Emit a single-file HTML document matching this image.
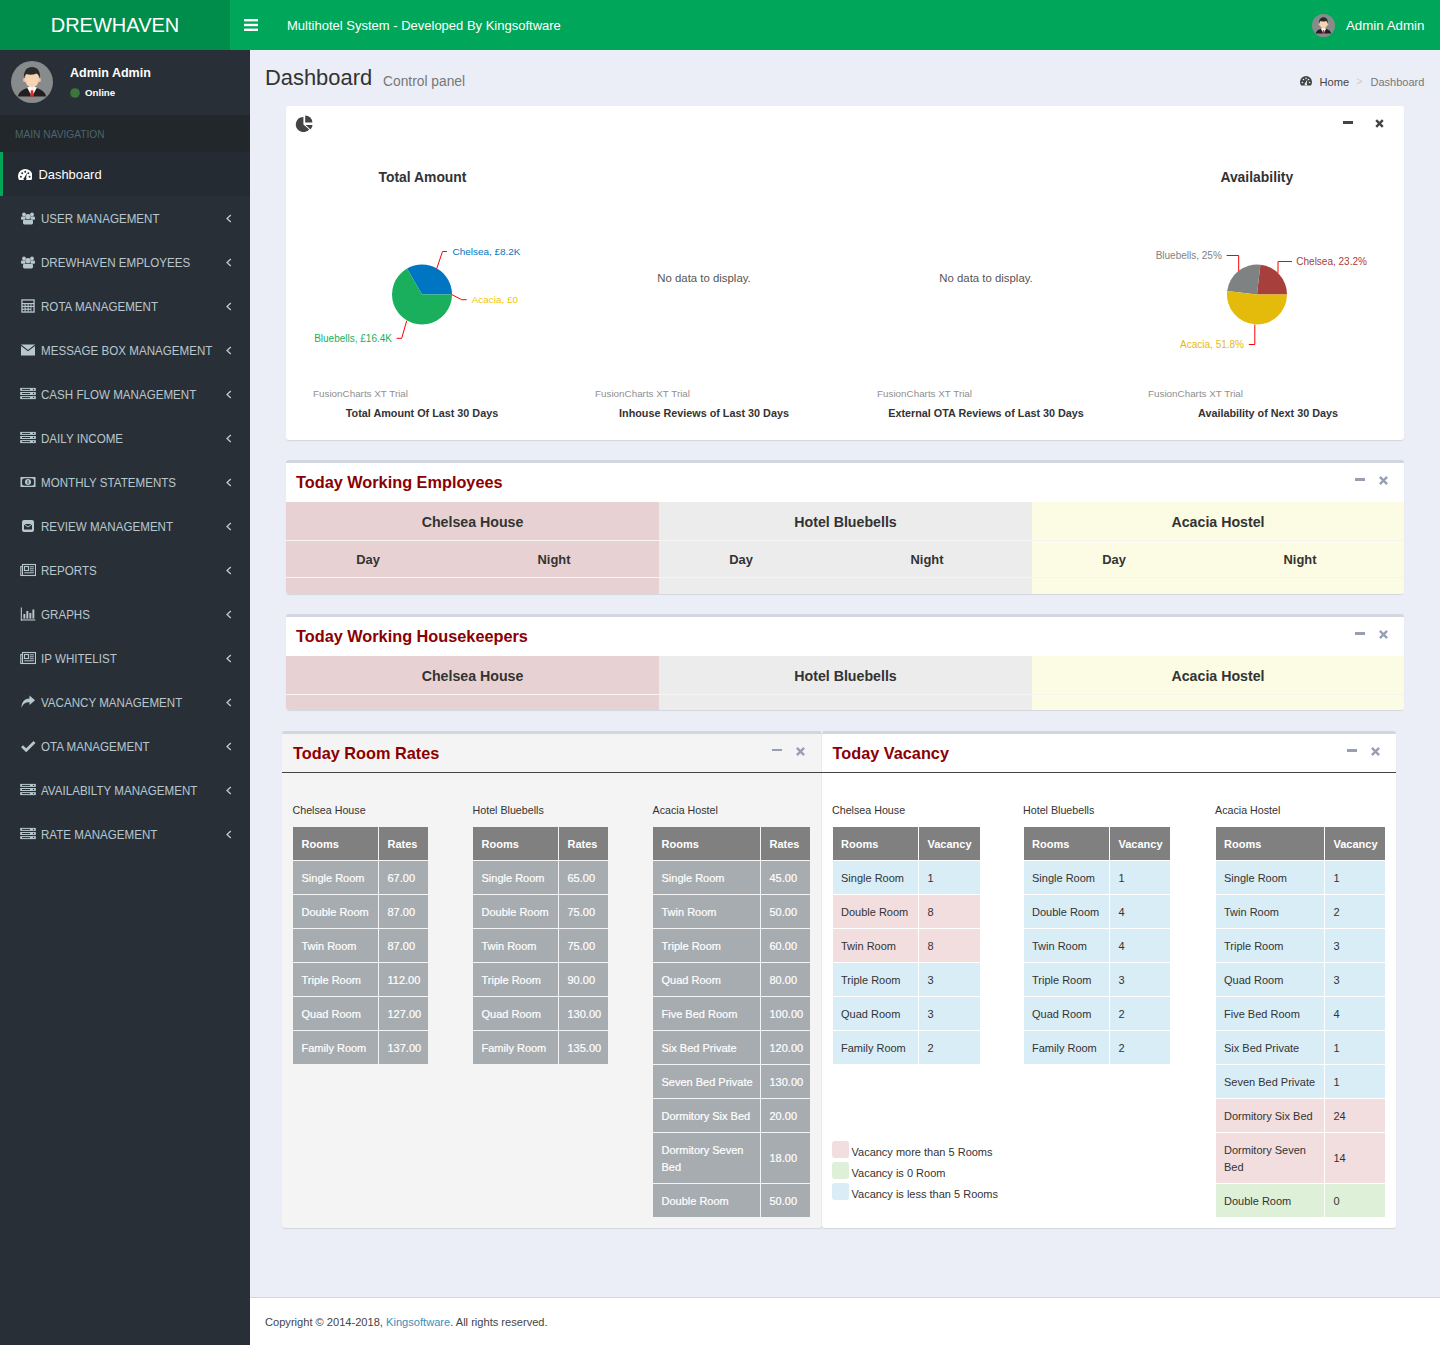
<!DOCTYPE html>
<html><head><meta charset="utf-8"><title>Dashboard</title>
<style>
*{box-sizing:border-box;margin:0;padding:0}
html,body{width:1440px;height:1345px;overflow:hidden}
body{position:relative;background:#ebeef6;font-family:"Liberation Sans",sans-serif;color:#333;font-size:13px}
.abs{position:absolute}
.nowrap{white-space:nowrap}
/* header */
#logo{left:0;top:0;width:230px;height:50px;background:#008d4c;color:#fff;font-size:20px;line-height:50px;text-align:center}
#navbar{left:230px;top:0;width:1210px;height:50px;background:#00a65a}
/* sidebar */
#sidebar{left:0;top:50px;width:250px;height:1295px;background:#292f37}
.menu{position:absolute;left:0;width:250px;height:44px;line-height:44px;color:#b8c7ce;font-size:11.6px}
.menu .ic{position:absolute;left:20px;top:14px;width:16px;height:16px}
.menu .tx{position:absolute;left:41px;top:0.5px;white-space:nowrap;font-size:13.6px;transform:scaleX(.853);transform-origin:0 50%}
.menu .ar{position:absolute;left:225px;top:18px;width:8px;height:9px}
/* boxes */
.box{position:absolute;background:#fff;border-radius:3px;box-shadow:0 1px 1px rgba(0,0,0,.1)}
.btop{border-top:3px solid #d2d6de}
.ttl{position:absolute;color:#8b0000;font-weight:bold;font-size:16.3px;white-space:nowrap}
.cell{position:absolute;text-align:center;font-weight:bold;color:#333}
.tc{-webkit-text-stroke:0.25px currentColor}
</style></head><body>

<!-- HEADER -->
<div id="logo" class="abs">DREWHAVEN</div>
<div id="navbar" class="abs">
  <svg class="abs" style="left:14px;top:19px" width="14" height="12" viewBox="0 0 14 12"><rect x="0" y="0" width="14" height="2.4" fill="#fff"/><rect x="0" y="4.8" width="14" height="2.4" fill="#fff"/><rect x="0" y="9.6" width="14" height="2.4" fill="#fff"/></svg>
  <div class="abs nowrap" style="left:57px;top:0.7px;line-height:50px;font-size:13px;color:#fff">Multihotel System - Developed By Kingsoftware</div>
  <svg class="abs" style="left:1082px;top:14px" width="23" height="23" viewBox="0 0 42 42"><use href="#avatar"/></svg>
  <div class="abs nowrap" style="left:1116px;top:0.5px;line-height:50px;font-size:13.3px;color:#fff">Admin Admin</div>
</div>

<!-- SIDEBAR -->
<div id="sidebar" class="abs"></div>
<svg class="abs" style="left:11px;top:61px" width="42" height="42" viewBox="0 0 42 42"><use href="#avatar"/></svg>
<div class="abs nowrap" style="left:70px;top:62.7px;line-height:20px;font-size:12.5px;font-weight:bold;color:#fff">Admin Admin</div>
<svg class="abs" style="left:70px;top:88px" width="10" height="10" viewBox="0 0 10 10"><circle cx="5" cy="5" r="4.8" fill="#3c763d"/></svg>
<div class="abs nowrap" style="left:85px;top:85px;line-height:16px;font-size:9.7px;font-weight:bold;color:#fff">Online</div>
<div class="abs" style="left:0;top:115px;width:250px;height:37px;background:#21272b"></div>
<div class="abs nowrap" style="left:15px;top:124.7px;line-height:20px;font-size:10.2px;color:#4b646f">MAIN NAVIGATION</div>
<div class="abs" style="left:0;top:152px;width:250px;height:44px;background:#252b33;border-left:3px solid #00a65a"></div>
<svg class="abs" style="left:17.5px;top:169px" width="14.5" height="11.4" viewBox="0 0 16 12.6"><use href="#i-dash"/></svg>
<div class="abs nowrap" style="left:38.5px;top:152.8px;line-height:44px;font-size:12.9px;color:#fff">Dashboard</div>
<svg width="0" height="0" style="position:absolute"><defs><g id="avatar"><circle cx="21" cy="21" r="21" fill="#888b8c"/><path d="M6.8 35.6C8 30.6 12 28.4 16.5 27L21 29L25.5 27C30 28.4 34 30.6 35.2 35.6Z" fill="#231f20"/><rect x="18.3" y="23" width="5.4" height="5" fill="#f0c9a4"/><path d="M16.2 26.8L21 35.6L25.8 26.8L23.6 25.8H18.4Z" fill="#fff"/><path d="M19.9 29.2H22.1L22.8 35.6H19.2Z" fill="#e8252a"/><ellipse cx="13.4" cy="19" rx="1.3" ry="2" fill="#f0c9a4"/><ellipse cx="28.6" cy="19" rx="1.3" ry="2" fill="#f0c9a4"/><ellipse cx="21" cy="18" rx="7" ry="8.4" fill="#f6d4b1"/><path d="M13 17.5C12.3 9.8 16 6 21 6C26 6 29.7 9.8 29 17.5C28.5 14.8 27.2 13.2 25.3 12.6C22.3 14.2 17.8 14 15.2 13C14 14.3 13.3 15.8 13 17.5Z" fill="#2b2b2b"/></g>
<g id="i-users" fill="#b8c7ce"><circle cx="4" cy="4.5" r="1.9"/><circle cx="12" cy="4.5" r="1.9"/><rect x="1" y="6.6" width="4.4" height="3.2" rx="1"/><rect x="10.6" y="6.6" width="4.4" height="3.2" rx="1"/><circle cx="8" cy="6.6" r="2.7"/><rect x="3" y="9.8" width="10" height="4.6" rx="1.4"/></g>
<g id="i-calc"><rect x="1.3" y="1.3" width="13.4" height="13.4" fill="#b8c7ce"/><rect x="2.6" y="2.6" width="10.8" height="2.4" fill="#292f37"/><g fill="#292f37"><rect x="2.6" y="6.2" width="2" height="1.6"/><rect x="5.6" y="6.2" width="2" height="1.6"/><rect x="8.6" y="6.2" width="2" height="1.6"/><rect x="11.4" y="6.2" width="2" height="1.6"/><rect x="2.6" y="9" width="2" height="1.6"/><rect x="5.6" y="9" width="2" height="1.6"/><rect x="8.6" y="9" width="2" height="1.6"/><rect x="11.4" y="9" width="2" height="4.4"/><rect x="2.6" y="11.8" width="2" height="1.6"/><rect x="5.6" y="11.8" width="2" height="1.6"/><rect x="8.6" y="11.8" width="2" height="1.6"/></g></g>
<g id="i-env"><rect x="1" y="2.5" width="14" height="11" fill="#b8c7ce"/><path d="M1 3.2L8 8.6L15 3.2" stroke="#292f37" stroke-width="1.1" fill="none"/></g>
<g id="i-server"><g fill="#b8c7ce"><rect x="0.2" y="1.9" width="15.6" height="3"/><rect x="0.2" y="6" width="15.6" height="3"/><rect x="0.2" y="10.1" width="15.6" height="3"/></g><g fill="#292f37"><rect x="2" y="2.9" width="8" height="1"/><rect x="2" y="7" width="8" height="1"/><rect x="2" y="11.1" width="8" height="1"/><circle cx="13.5" cy="3.4" r=".7"/><circle cx="13.5" cy="7.5" r=".7"/><circle cx="13.5" cy="11.6" r=".7"/></g></g>
<g id="i-money"><rect x="0.5" y="3" width="15" height="10" fill="#b8c7ce"/><rect x="2" y="4.3" width="12" height="7.4" rx="2.5" fill="#292f37"/><circle cx="8" cy="8" r="3" fill="#b8c7ce"/><rect x="7.5" y="6.2" width="1" height="3.6" fill="#292f37"/></g>
<g id="i-envsq"><rect x="2" y="2" width="12" height="12" rx="2" fill="#b8c7ce"/><rect x="4" y="6" width="8" height="5.5" fill="#292f37"/><path d="M4 6.2L8 9L12 6.2" stroke="#b8c7ce" stroke-width="1" fill="none"/></g>
<g id="i-news"><rect x="2.5" y="2.5" width="13" height="11" fill="none" stroke="#b8c7ce" stroke-width="1.1"/><path d="M2.5 4.5H0.8V13.5H2.5" fill="none" stroke="#b8c7ce" stroke-width="1.1"/><rect x="4.5" y="4.5" width="4" height="4" fill="none" stroke="#b8c7ce" stroke-width="1.1"/><g fill="#b8c7ce"><rect x="9.8" y="4.3" width="4" height="1"/><rect x="9.8" y="6.3" width="4" height="1"/><rect x="9.8" y="8.3" width="4" height="1"/><rect x="4.3" y="10.3" width="9.5" height="1"/></g></g>
<g id="i-bar" fill="#b8c7ce"><rect x="0.8" y="1.5" width="1.1" height="13"/><rect x="0.8" y="13.4" width="14.5" height="1.1"/><rect x="3.4" y="8" width="1.9" height="4.6"/><rect x="6.4" y="5" width="1.9" height="7.6"/><rect x="9.4" y="7" width="1.9" height="5.6"/><rect x="12.4" y="3.5" width="1.9" height="9.1"/></g>
<g id="i-share"><path d="M9.5 1.5L15 6.3L9.5 11V8.3C5.5 8.2 3.2 9.5 1.5 14C1.5 8.2 4.2 4.8 9.5 4.5Z" fill="#b8c7ce"/></g>
<g id="i-check"><path d="M2 8.2L6.2 12.2L14.5 4" stroke="#b8c7ce" stroke-width="2.8" fill="none"/></g>
<g id="i-dash"><path d="M1.45 12.6A8 8 0 1 1 14.55 12.6Z" fill="#fff"/><g fill="#252b33"><circle cx="3.2" cy="8.6" r="1.1"/><circle cx="4.6" cy="4.6" r="1.1"/><circle cx="8" cy="3" r="1.1"/><circle cx="11.4" cy="4.6" r="1.1"/><circle cx="12.8" cy="8.6" r="1.1"/><path d="M10 4.4L9 9.8A1.6 1.6 0 1 1 7 9.4Z"/></g></g>
</defs></svg>
<div class="menu" style="top:196px"><svg class="ic" viewBox="0 0 16 16"><use href="#i-users"/></svg><span class="tx">USER MANAGEMENT</span><svg class="ar" viewBox="0 0 8 10"><path d="M6 1L1.8 5L6 9" stroke="#b8c7ce" stroke-width="1.5" fill="none"/></svg></div>
<div class="menu" style="top:240px"><svg class="ic" viewBox="0 0 16 16"><use href="#i-users"/></svg><span class="tx">DREWHAVEN EMPLOYEES</span><svg class="ar" viewBox="0 0 8 10"><path d="M6 1L1.8 5L6 9" stroke="#b8c7ce" stroke-width="1.5" fill="none"/></svg></div>
<div class="menu" style="top:284px"><svg class="ic" viewBox="0 0 16 16"><use href="#i-calc"/></svg><span class="tx">ROTA MANAGEMENT</span><svg class="ar" viewBox="0 0 8 10"><path d="M6 1L1.8 5L6 9" stroke="#b8c7ce" stroke-width="1.5" fill="none"/></svg></div>
<div class="menu" style="top:328px"><svg class="ic" viewBox="0 0 16 16"><use href="#i-env"/></svg><span class="tx">MESSAGE BOX MANAGEMENT</span><svg class="ar" viewBox="0 0 8 10"><path d="M6 1L1.8 5L6 9" stroke="#b8c7ce" stroke-width="1.5" fill="none"/></svg></div>
<div class="menu" style="top:372px"><svg class="ic" viewBox="0 0 16 16"><use href="#i-server"/></svg><span class="tx">CASH FLOW MANAGEMENT</span><svg class="ar" viewBox="0 0 8 10"><path d="M6 1L1.8 5L6 9" stroke="#b8c7ce" stroke-width="1.5" fill="none"/></svg></div>
<div class="menu" style="top:416px"><svg class="ic" viewBox="0 0 16 16"><use href="#i-server"/></svg><span class="tx">DAILY INCOME</span><svg class="ar" viewBox="0 0 8 10"><path d="M6 1L1.8 5L6 9" stroke="#b8c7ce" stroke-width="1.5" fill="none"/></svg></div>
<div class="menu" style="top:460px"><svg class="ic" viewBox="0 0 16 16"><use href="#i-money"/></svg><span class="tx">MONTHLY STATEMENTS</span><svg class="ar" viewBox="0 0 8 10"><path d="M6 1L1.8 5L6 9" stroke="#b8c7ce" stroke-width="1.5" fill="none"/></svg></div>
<div class="menu" style="top:504px"><svg class="ic" viewBox="0 0 16 16"><use href="#i-envsq"/></svg><span class="tx">REVIEW MANAGEMENT</span><svg class="ar" viewBox="0 0 8 10"><path d="M6 1L1.8 5L6 9" stroke="#b8c7ce" stroke-width="1.5" fill="none"/></svg></div>
<div class="menu" style="top:548px"><svg class="ic" viewBox="0 0 16 16"><use href="#i-news"/></svg><span class="tx">REPORTS</span><svg class="ar" viewBox="0 0 8 10"><path d="M6 1L1.8 5L6 9" stroke="#b8c7ce" stroke-width="1.5" fill="none"/></svg></div>
<div class="menu" style="top:592px"><svg class="ic" viewBox="0 0 16 16"><use href="#i-bar"/></svg><span class="tx">GRAPHS</span><svg class="ar" viewBox="0 0 8 10"><path d="M6 1L1.8 5L6 9" stroke="#b8c7ce" stroke-width="1.5" fill="none"/></svg></div>
<div class="menu" style="top:636px"><svg class="ic" viewBox="0 0 16 16"><use href="#i-news"/></svg><span class="tx">IP WHITELIST</span><svg class="ar" viewBox="0 0 8 10"><path d="M6 1L1.8 5L6 9" stroke="#b8c7ce" stroke-width="1.5" fill="none"/></svg></div>
<div class="menu" style="top:680px"><svg class="ic" viewBox="0 0 16 16"><use href="#i-share"/></svg><span class="tx">VACANCY MANAGEMENT</span><svg class="ar" viewBox="0 0 8 10"><path d="M6 1L1.8 5L6 9" stroke="#b8c7ce" stroke-width="1.5" fill="none"/></svg></div>
<div class="menu" style="top:724px"><svg class="ic" viewBox="0 0 16 16"><use href="#i-check"/></svg><span class="tx">OTA MANAGEMENT</span><svg class="ar" viewBox="0 0 8 10"><path d="M6 1L1.8 5L6 9" stroke="#b8c7ce" stroke-width="1.5" fill="none"/></svg></div>
<div class="menu" style="top:768px"><svg class="ic" viewBox="0 0 16 16"><use href="#i-server"/></svg><span class="tx">AVAILABILTY MANAGEMENT</span><svg class="ar" viewBox="0 0 8 10"><path d="M6 1L1.8 5L6 9" stroke="#b8c7ce" stroke-width="1.5" fill="none"/></svg></div>
<div class="menu" style="top:812px"><svg class="ic" viewBox="0 0 16 16"><use href="#i-server"/></svg><span class="tx">RATE MANAGEMENT</span><svg class="ar" viewBox="0 0 8 10"><path d="M6 1L1.8 5L6 9" stroke="#b8c7ce" stroke-width="1.5" fill="none"/></svg></div>

<!-- CONTENT HEADER -->
<div class="abs nowrap" style="left:265px;top:63px;line-height:30px;font-size:21.9px;color:#333">Dashboard</div>
<div class="abs nowrap" style="left:383px;top:71.5px;line-height:20px;font-size:13.8px;color:#777">Control panel</div>

<svg class="abs" style="left:1300px;top:76px" width="12" height="9.6" viewBox="0 0 16 12.6"><path d="M1.45 12.6A8 8 0 1 1 14.55 12.6Z" fill="#444"/><g fill="#ebeef6"><circle cx="3.2" cy="8.6" r="1.1"/><circle cx="4.6" cy="4.6" r="1.1"/><circle cx="8" cy="3" r="1.1"/><circle cx="11.4" cy="4.6" r="1.1"/><circle cx="12.8" cy="8.6" r="1.1"/><path d="M10 4.4L9 9.8A1.6 1.6 0 1 1 7 9.4Z"/></g></svg>
<div class="abs nowrap" style="left:1319.5px;top:72px;line-height:20px;font-size:11.1px;color:#444">Home</div>
<div class="abs nowrap" style="left:1356.5px;top:72px;line-height:20px;font-size:10px;color:#ccc">&gt;</div>
<div class="abs nowrap" style="left:1370.5px;top:72px;line-height:20px;font-size:11px;color:#777">Dashboard</div>
<!-- BOX 1 charts -->
<div class="box" style="left:286px;top:106px;width:1118px;height:334px">
<svg class="abs" style="left:0;top:0" width="1118" height="334" viewBox="0 0 1118 334" font-family="Liberation Sans">
<g transform="translate(6,5)" fill="#444"><path d="M11.4 13.5V5.9A7.6 7.6 0 1 0 17.2 18.4Z"/><path d="M13.2 11.6V4.4A7.2 7.2 0 0 1 20.4 11.6Z"/><path d="M13.6 13.9H20.5A7.2 7.2 0 0 1 18.6 18.4Z"/></g>
<path d="M136 188.5L166.00 188.50A30 30 0 0 0 121.00 162.52Z" fill="#0075c2"/><path d="M136 188.5L121.00 162.52A30 30 0 1 0 166.00 188.50Z" fill="#1aaf5d"/><path d="M971 188.5L1001.00 188.50A30 30 0 0 0 974.40 158.69Z" fill="#a6403d"/><path d="M971 188.5L974.40 158.69A30 30 0 0 0 941.19 185.10Z" fill="#7f8283"/><path d="M971 188.5L941.19 185.10A30 30 0 1 0 1001.00 188.50Z" fill="#e5bb0b"/><polyline points="150.7,162.7 156.5,145.5 161.0,145.5" fill="none" stroke="#ff0000" stroke-width="1"/><polyline points="165.7,188.5 175.7,193.7 180.7,193.7" fill="none" stroke="#ff0000" stroke-width="1"/><polyline points="120.7,214.8 115.7,232.3 110.7,232.3" fill="none" stroke="#ff0000" stroke-width="1"/><polyline points="940.6,149.5 952.7,149.5 952.7,165.0" fill="none" stroke="#ff0000" stroke-width="1"/><polyline points="992.0,167.0 992.0,155.5 1006.0,155.5" fill="none" stroke="#ff0000" stroke-width="1"/><polyline points="968.8,218.7 968.8,238.5 962.8,238.5" fill="none" stroke="#ff0000" stroke-width="1"/><text x="166.5" y="145.7" fill="#0075c2" font-size="9.95" text-anchor="start" font-weight="normal" dominant-baseline="central">Chelsea, £8.2K</text><text x="185.7" y="193.7" fill="#f2c500" font-size="9.95" text-anchor="start" font-weight="normal" dominant-baseline="central">Acacia, £0</text><text x="106.0" y="232.0" fill="#1aaf5d" font-size="10" text-anchor="end" font-weight="normal" dominant-baseline="central">Bluebells, £16.4K</text><text x="935.8" y="149.5" fill="#7f8283" font-size="10" text-anchor="end" font-weight="normal" dominant-baseline="central">Bluebells, 25%</text><text x="1010.3" y="155.0" fill="#a6403d" font-size="10" text-anchor="start" font-weight="normal" dominant-baseline="central">Chelsea, 23.2%</text><text x="958.0" y="238.0" fill="#e5bb0b" font-size="10" text-anchor="end" font-weight="normal" dominant-baseline="central">Acacia, 51.8%</text><text x="136.5" y="70.6" fill="#333" font-size="13.9" text-anchor="middle" font-weight="bold" dominant-baseline="central">Total Amount</text><text x="970.8" y="70.6" fill="#333" font-size="13.9" text-anchor="middle" font-weight="bold" dominant-baseline="central">Availability</text><text x="418.0" y="172.4" fill="#555" font-size="11.4" text-anchor="middle" font-weight="normal" dominant-baseline="central">No data to display.</text><text x="700.0" y="172.4" fill="#555" font-size="11.4" text-anchor="middle" font-weight="normal" dominant-baseline="central">No data to display.</text><text x="27.0" y="287.3" fill="#8f8f8f" font-size="9.85" text-anchor="start" font-weight="normal" dominant-baseline="central">FusionCharts XT Trial</text><text x="309.0" y="287.3" fill="#8f8f8f" font-size="9.85" text-anchor="start" font-weight="normal" dominant-baseline="central">FusionCharts XT Trial</text><text x="591.0" y="287.3" fill="#8f8f8f" font-size="9.85" text-anchor="start" font-weight="normal" dominant-baseline="central">FusionCharts XT Trial</text><text x="862.0" y="287.3" fill="#8f8f8f" font-size="9.85" text-anchor="start" font-weight="normal" dominant-baseline="central">FusionCharts XT Trial</text><text x="136.0" y="307.2" fill="#333" font-size="10.8" text-anchor="middle" font-weight="bold" dominant-baseline="central">Total Amount Of Last 30 Days</text><text x="418.0" y="307.2" fill="#333" font-size="10.8" text-anchor="middle" font-weight="bold" dominant-baseline="central">Inhouse Reviews of Last 30 Days</text><text x="700.0" y="307.2" fill="#333" font-size="10.8" text-anchor="middle" font-weight="bold" dominant-baseline="central">External OTA Reviews of Last 30 Days</text><text x="982.0" y="307.2" fill="#333" font-size="10.8" text-anchor="middle" font-weight="bold" dominant-baseline="central">Availability of Next 30 Days</text>
</svg>
</div>

<div class="abs" style="left:1342.5px;top:121px;width:10px;height:3px;background:#444"></div>
<svg class="abs" style="left:1375.3px;top:118.8px" width="9" height="9" viewBox="0 0 9 9"><path d="M1.2 1.2L7.8 7.8M7.8 1.2L1.2 7.8" stroke="#444" stroke-width="2.4"/></svg>
<!-- BOX 2 -->
<div class="box" style="left:286px;top:460px;width:1118px;height:134px;border-top:3px solid #d2d6de;overflow:hidden"></div><div class="ttl" style="left:296px;top:472px;line-height:20px">Today Working Employees</div><div class="abs" style="left:1354.6px;top:478.15px;width:10px;height:2.5px;background:#97a0b3"></div><svg class="abs" style="left:1378.9px;top:475.5px" width="9" height="9" viewBox="0 0 9 9"><path d="M0.9 0.9L8.1 8.1M8.1 0.9L0.9 8.1" stroke="#97a0b3" stroke-width="2.4"/></svg><div class="abs" style="left:286px;top:502px;width:373px;height:92px;background:#e8d1d2;border-bottom-left-radius:3px"></div><div class="abs" style="left:286px;top:540px;width:373px;height:1px;background:#f4f4f4"></div><div class="cell" style="left:286px;top:502.8px;width:373px;line-height:38px;font-size:14.2px">Chelsea House</div><div class="abs" style="left:286px;top:577px;width:373px;height:1px;background:#f4f4f4"></div><div class="cell" style="left:286px;top:542px;width:164px;line-height:36px;font-size:12.9px">Day</div><div class="cell" style="left:450px;top:542px;width:208px;line-height:36px;font-size:12.9px">Night</div><div class="abs" style="left:659px;top:502px;width:373px;height:92px;background:#ececec"></div><div class="abs" style="left:659px;top:540px;width:373px;height:1px;background:#f4f4f4"></div><div class="cell" style="left:659px;top:502.8px;width:373px;line-height:38px;font-size:14.2px">Hotel Bluebells</div><div class="abs" style="left:659px;top:577px;width:373px;height:1px;background:#f4f4f4"></div><div class="cell" style="left:659px;top:542px;width:164px;line-height:36px;font-size:12.9px">Day</div><div class="cell" style="left:823px;top:542px;width:208px;line-height:36px;font-size:12.9px">Night</div><div class="abs" style="left:1032px;top:502px;width:372px;height:92px;background:#fcfce4;border-bottom-right-radius:3px"></div><div class="abs" style="left:1032px;top:540px;width:372px;height:1px;background:#f4f4f4"></div><div class="cell" style="left:1032px;top:502.8px;width:372px;line-height:38px;font-size:14.2px">Acacia Hostel</div><div class="abs" style="left:1032px;top:577px;width:372px;height:1px;background:#f4f4f4"></div><div class="cell" style="left:1032px;top:542px;width:164px;line-height:36px;font-size:12.9px">Day</div><div class="cell" style="left:1196px;top:542px;width:208px;line-height:36px;font-size:12.9px">Night</div>
<!-- BOX 3 -->
<div class="box" style="left:286px;top:614px;width:1118px;height:96px;border-top:3px solid #d2d6de;overflow:hidden"></div><div class="ttl" style="left:296px;top:626px;line-height:20px">Today Working Housekeepers</div><div class="abs" style="left:1354.6px;top:632.15px;width:10px;height:2.5px;background:#97a0b3"></div><svg class="abs" style="left:1378.9px;top:629.5px" width="9" height="9" viewBox="0 0 9 9"><path d="M0.9 0.9L8.1 8.1M8.1 0.9L0.9 8.1" stroke="#97a0b3" stroke-width="2.4"/></svg><div class="abs" style="left:286px;top:656px;width:373px;height:54px;background:#e8d1d2;border-bottom-left-radius:3px"></div><div class="abs" style="left:286px;top:694px;width:373px;height:1px;background:#f4f4f4"></div><div class="cell" style="left:286px;top:656.8px;width:373px;line-height:38px;font-size:14.2px">Chelsea House</div><div class="abs" style="left:659px;top:656px;width:373px;height:54px;background:#ececec"></div><div class="abs" style="left:659px;top:694px;width:373px;height:1px;background:#f4f4f4"></div><div class="cell" style="left:659px;top:656.8px;width:373px;line-height:38px;font-size:14.2px">Hotel Bluebells</div><div class="abs" style="left:1032px;top:656px;width:372px;height:54px;background:#fcfce4;border-bottom-right-radius:3px"></div><div class="abs" style="left:1032px;top:694px;width:372px;height:1px;background:#f4f4f4"></div><div class="cell" style="left:1032px;top:656.8px;width:372px;line-height:38px;font-size:14.2px">Acacia Hostel</div>
<!-- BOX 4 -->
<div class="box" style="left:282px;top:731px;width:540px;height:497px;background:#f4f4f4;border-top:3px solid #d2d6de;border-right:1px solid #ececec"></div>
<div class="abs" style="left:282px;top:772px;width:540px;height:1px;background:#444"></div>
<div class="ttl" style="left:293px;top:743px;line-height:20px">Today Room Rates</div>
<div class="abs" style="left:772.2px;top:748.95px;width:10px;height:2.5px;background:#97a0b3"></div><svg class="abs" style="left:796.4px;top:746.5px" width="9" height="9" viewBox="0 0 9 9"><path d="M0.9 0.9L8.1 8.1M8.1 0.9L0.9 8.1" stroke="#97a0b3" stroke-width="2.4"/></svg>
<!-- BOX 5 -->
<div class="box" style="left:822px;top:731px;width:574px;height:497px;background:#fff;border-top:3px solid #d2d6de"></div>
<div class="abs" style="left:822px;top:772px;width:574px;height:1px;background:#444"></div>
<div class="ttl" style="left:832.5px;top:743px;line-height:20px">Today Vacancy</div>
<div class="abs" style="left:1346.6px;top:749.05px;width:10px;height:2.5px;background:#97a0b3"></div><svg class="abs" style="left:1370.9px;top:746.5px" width="9" height="9" viewBox="0 0 9 9"><path d="M0.9 0.9L8.1 8.1M8.1 0.9L0.9 8.1" stroke="#97a0b3" stroke-width="2.4"/></svg>
<div class="abs nowrap" style="left:292.5px;top:800px;line-height:20px;font-size:10.7px;color:#333">Chelsea House</div><div class="abs" style="left:293px;top:827px;width:85px;height:33px;background:#808080"></div><div class="abs" style="left:301.5px;top:827.7px;height:33px;display:flex;align-items:center;font-size:11px;font-weight:bold;color:#fff;line-height:17px;white-space:nowrap">Rooms</div><div class="abs" style="left:379px;top:827px;width:49px;height:33px;background:#808080"></div><div class="abs" style="left:387.5px;top:827.7px;height:33px;display:flex;align-items:center;font-size:11px;font-weight:bold;color:#fff;line-height:17px;white-space:nowrap">Rates</div><div class="abs" style="left:293px;top:861px;width:85px;height:33px;background:#a7acb0"></div><div class="abs" style="left:301.5px;top:861.7px;height:33px;display:flex;align-items:center;font-size:11px;-webkit-text-stroke:0.2px currentColor;color:#fff;line-height:17px;white-space:nowrap">Single Room</div><div class="abs" style="left:379px;top:861px;width:49px;height:33px;background:#a7acb0"></div><div class="abs" style="left:387.5px;top:861.7px;height:33px;display:flex;align-items:center;font-size:11px;-webkit-text-stroke:0.2px currentColor;color:#fff;line-height:17px;white-space:nowrap">67.00</div><div class="abs" style="left:293px;top:895px;width:85px;height:33px;background:#a7acb0"></div><div class="abs" style="left:301.5px;top:895.7px;height:33px;display:flex;align-items:center;font-size:11px;-webkit-text-stroke:0.2px currentColor;color:#fff;line-height:17px;white-space:nowrap">Double Room</div><div class="abs" style="left:379px;top:895px;width:49px;height:33px;background:#a7acb0"></div><div class="abs" style="left:387.5px;top:895.7px;height:33px;display:flex;align-items:center;font-size:11px;-webkit-text-stroke:0.2px currentColor;color:#fff;line-height:17px;white-space:nowrap">87.00</div><div class="abs" style="left:293px;top:929px;width:85px;height:33px;background:#a7acb0"></div><div class="abs" style="left:301.5px;top:929.7px;height:33px;display:flex;align-items:center;font-size:11px;-webkit-text-stroke:0.2px currentColor;color:#fff;line-height:17px;white-space:nowrap">Twin Room</div><div class="abs" style="left:379px;top:929px;width:49px;height:33px;background:#a7acb0"></div><div class="abs" style="left:387.5px;top:929.7px;height:33px;display:flex;align-items:center;font-size:11px;-webkit-text-stroke:0.2px currentColor;color:#fff;line-height:17px;white-space:nowrap">87.00</div><div class="abs" style="left:293px;top:963px;width:85px;height:33px;background:#a7acb0"></div><div class="abs" style="left:301.5px;top:963.7px;height:33px;display:flex;align-items:center;font-size:11px;-webkit-text-stroke:0.2px currentColor;color:#fff;line-height:17px;white-space:nowrap">Triple Room</div><div class="abs" style="left:379px;top:963px;width:49px;height:33px;background:#a7acb0"></div><div class="abs" style="left:387.5px;top:963.7px;height:33px;display:flex;align-items:center;font-size:11px;-webkit-text-stroke:0.2px currentColor;color:#fff;line-height:17px;white-space:nowrap">112.00</div><div class="abs" style="left:293px;top:997px;width:85px;height:33px;background:#a7acb0"></div><div class="abs" style="left:301.5px;top:997.7px;height:33px;display:flex;align-items:center;font-size:11px;-webkit-text-stroke:0.2px currentColor;color:#fff;line-height:17px;white-space:nowrap">Quad Room</div><div class="abs" style="left:379px;top:997px;width:49px;height:33px;background:#a7acb0"></div><div class="abs" style="left:387.5px;top:997.7px;height:33px;display:flex;align-items:center;font-size:11px;-webkit-text-stroke:0.2px currentColor;color:#fff;line-height:17px;white-space:nowrap">127.00</div><div class="abs" style="left:293px;top:1031px;width:85px;height:33px;background:#a7acb0"></div><div class="abs" style="left:301.5px;top:1031.7px;height:33px;display:flex;align-items:center;font-size:11px;-webkit-text-stroke:0.2px currentColor;color:#fff;line-height:17px;white-space:nowrap">Family Room</div><div class="abs" style="left:379px;top:1031px;width:49px;height:33px;background:#a7acb0"></div><div class="abs" style="left:387.5px;top:1031.7px;height:33px;display:flex;align-items:center;font-size:11px;-webkit-text-stroke:0.2px currentColor;color:#fff;line-height:17px;white-space:nowrap">137.00</div>
<div class="abs nowrap" style="left:472.5px;top:800px;line-height:20px;font-size:10.7px;color:#333">Hotel Bluebells</div><div class="abs" style="left:473px;top:827px;width:85px;height:33px;background:#808080"></div><div class="abs" style="left:481.5px;top:827.7px;height:33px;display:flex;align-items:center;font-size:11px;font-weight:bold;color:#fff;line-height:17px;white-space:nowrap">Rooms</div><div class="abs" style="left:559px;top:827px;width:49px;height:33px;background:#808080"></div><div class="abs" style="left:567.5px;top:827.7px;height:33px;display:flex;align-items:center;font-size:11px;font-weight:bold;color:#fff;line-height:17px;white-space:nowrap">Rates</div><div class="abs" style="left:473px;top:861px;width:85px;height:33px;background:#a7acb0"></div><div class="abs" style="left:481.5px;top:861.7px;height:33px;display:flex;align-items:center;font-size:11px;-webkit-text-stroke:0.2px currentColor;color:#fff;line-height:17px;white-space:nowrap">Single Room</div><div class="abs" style="left:559px;top:861px;width:49px;height:33px;background:#a7acb0"></div><div class="abs" style="left:567.5px;top:861.7px;height:33px;display:flex;align-items:center;font-size:11px;-webkit-text-stroke:0.2px currentColor;color:#fff;line-height:17px;white-space:nowrap">65.00</div><div class="abs" style="left:473px;top:895px;width:85px;height:33px;background:#a7acb0"></div><div class="abs" style="left:481.5px;top:895.7px;height:33px;display:flex;align-items:center;font-size:11px;-webkit-text-stroke:0.2px currentColor;color:#fff;line-height:17px;white-space:nowrap">Double Room</div><div class="abs" style="left:559px;top:895px;width:49px;height:33px;background:#a7acb0"></div><div class="abs" style="left:567.5px;top:895.7px;height:33px;display:flex;align-items:center;font-size:11px;-webkit-text-stroke:0.2px currentColor;color:#fff;line-height:17px;white-space:nowrap">75.00</div><div class="abs" style="left:473px;top:929px;width:85px;height:33px;background:#a7acb0"></div><div class="abs" style="left:481.5px;top:929.7px;height:33px;display:flex;align-items:center;font-size:11px;-webkit-text-stroke:0.2px currentColor;color:#fff;line-height:17px;white-space:nowrap">Twin Room</div><div class="abs" style="left:559px;top:929px;width:49px;height:33px;background:#a7acb0"></div><div class="abs" style="left:567.5px;top:929.7px;height:33px;display:flex;align-items:center;font-size:11px;-webkit-text-stroke:0.2px currentColor;color:#fff;line-height:17px;white-space:nowrap">75.00</div><div class="abs" style="left:473px;top:963px;width:85px;height:33px;background:#a7acb0"></div><div class="abs" style="left:481.5px;top:963.7px;height:33px;display:flex;align-items:center;font-size:11px;-webkit-text-stroke:0.2px currentColor;color:#fff;line-height:17px;white-space:nowrap">Triple Room</div><div class="abs" style="left:559px;top:963px;width:49px;height:33px;background:#a7acb0"></div><div class="abs" style="left:567.5px;top:963.7px;height:33px;display:flex;align-items:center;font-size:11px;-webkit-text-stroke:0.2px currentColor;color:#fff;line-height:17px;white-space:nowrap">90.00</div><div class="abs" style="left:473px;top:997px;width:85px;height:33px;background:#a7acb0"></div><div class="abs" style="left:481.5px;top:997.7px;height:33px;display:flex;align-items:center;font-size:11px;-webkit-text-stroke:0.2px currentColor;color:#fff;line-height:17px;white-space:nowrap">Quad Room</div><div class="abs" style="left:559px;top:997px;width:49px;height:33px;background:#a7acb0"></div><div class="abs" style="left:567.5px;top:997.7px;height:33px;display:flex;align-items:center;font-size:11px;-webkit-text-stroke:0.2px currentColor;color:#fff;line-height:17px;white-space:nowrap">130.00</div><div class="abs" style="left:473px;top:1031px;width:85px;height:33px;background:#a7acb0"></div><div class="abs" style="left:481.5px;top:1031.7px;height:33px;display:flex;align-items:center;font-size:11px;-webkit-text-stroke:0.2px currentColor;color:#fff;line-height:17px;white-space:nowrap">Family Room</div><div class="abs" style="left:559px;top:1031px;width:49px;height:33px;background:#a7acb0"></div><div class="abs" style="left:567.5px;top:1031.7px;height:33px;display:flex;align-items:center;font-size:11px;-webkit-text-stroke:0.2px currentColor;color:#fff;line-height:17px;white-space:nowrap">135.00</div>
<div class="abs nowrap" style="left:652.5px;top:800px;line-height:20px;font-size:10.7px;color:#333">Acacia Hostel</div><div class="abs" style="left:653px;top:827px;width:107px;height:33px;background:#808080"></div><div class="abs" style="left:661.5px;top:827.7px;height:33px;display:flex;align-items:center;font-size:11px;font-weight:bold;color:#fff;line-height:17px;white-space:nowrap">Rooms</div><div class="abs" style="left:761px;top:827px;width:49px;height:33px;background:#808080"></div><div class="abs" style="left:769.5px;top:827.7px;height:33px;display:flex;align-items:center;font-size:11px;font-weight:bold;color:#fff;line-height:17px;white-space:nowrap">Rates</div><div class="abs" style="left:653px;top:861px;width:107px;height:33px;background:#a7acb0"></div><div class="abs" style="left:661.5px;top:861.7px;height:33px;display:flex;align-items:center;font-size:11px;-webkit-text-stroke:0.2px currentColor;color:#fff;line-height:17px;white-space:nowrap">Single Room</div><div class="abs" style="left:761px;top:861px;width:49px;height:33px;background:#a7acb0"></div><div class="abs" style="left:769.5px;top:861.7px;height:33px;display:flex;align-items:center;font-size:11px;-webkit-text-stroke:0.2px currentColor;color:#fff;line-height:17px;white-space:nowrap">45.00</div><div class="abs" style="left:653px;top:895px;width:107px;height:33px;background:#a7acb0"></div><div class="abs" style="left:661.5px;top:895.7px;height:33px;display:flex;align-items:center;font-size:11px;-webkit-text-stroke:0.2px currentColor;color:#fff;line-height:17px;white-space:nowrap">Twin Room</div><div class="abs" style="left:761px;top:895px;width:49px;height:33px;background:#a7acb0"></div><div class="abs" style="left:769.5px;top:895.7px;height:33px;display:flex;align-items:center;font-size:11px;-webkit-text-stroke:0.2px currentColor;color:#fff;line-height:17px;white-space:nowrap">50.00</div><div class="abs" style="left:653px;top:929px;width:107px;height:33px;background:#a7acb0"></div><div class="abs" style="left:661.5px;top:929.7px;height:33px;display:flex;align-items:center;font-size:11px;-webkit-text-stroke:0.2px currentColor;color:#fff;line-height:17px;white-space:nowrap">Triple Room</div><div class="abs" style="left:761px;top:929px;width:49px;height:33px;background:#a7acb0"></div><div class="abs" style="left:769.5px;top:929.7px;height:33px;display:flex;align-items:center;font-size:11px;-webkit-text-stroke:0.2px currentColor;color:#fff;line-height:17px;white-space:nowrap">60.00</div><div class="abs" style="left:653px;top:963px;width:107px;height:33px;background:#a7acb0"></div><div class="abs" style="left:661.5px;top:963.7px;height:33px;display:flex;align-items:center;font-size:11px;-webkit-text-stroke:0.2px currentColor;color:#fff;line-height:17px;white-space:nowrap">Quad Room</div><div class="abs" style="left:761px;top:963px;width:49px;height:33px;background:#a7acb0"></div><div class="abs" style="left:769.5px;top:963.7px;height:33px;display:flex;align-items:center;font-size:11px;-webkit-text-stroke:0.2px currentColor;color:#fff;line-height:17px;white-space:nowrap">80.00</div><div class="abs" style="left:653px;top:997px;width:107px;height:33px;background:#a7acb0"></div><div class="abs" style="left:661.5px;top:997.7px;height:33px;display:flex;align-items:center;font-size:11px;-webkit-text-stroke:0.2px currentColor;color:#fff;line-height:17px;white-space:nowrap">Five Bed Room</div><div class="abs" style="left:761px;top:997px;width:49px;height:33px;background:#a7acb0"></div><div class="abs" style="left:769.5px;top:997.7px;height:33px;display:flex;align-items:center;font-size:11px;-webkit-text-stroke:0.2px currentColor;color:#fff;line-height:17px;white-space:nowrap">100.00</div><div class="abs" style="left:653px;top:1031px;width:107px;height:33px;background:#a7acb0"></div><div class="abs" style="left:661.5px;top:1031.7px;height:33px;display:flex;align-items:center;font-size:11px;-webkit-text-stroke:0.2px currentColor;color:#fff;line-height:17px;white-space:nowrap">Six Bed Private</div><div class="abs" style="left:761px;top:1031px;width:49px;height:33px;background:#a7acb0"></div><div class="abs" style="left:769.5px;top:1031.7px;height:33px;display:flex;align-items:center;font-size:11px;-webkit-text-stroke:0.2px currentColor;color:#fff;line-height:17px;white-space:nowrap">120.00</div><div class="abs" style="left:653px;top:1065px;width:107px;height:33px;background:#a7acb0"></div><div class="abs" style="left:661.5px;top:1065.7px;height:33px;display:flex;align-items:center;font-size:11px;-webkit-text-stroke:0.2px currentColor;color:#fff;line-height:17px;white-space:nowrap">Seven Bed Private</div><div class="abs" style="left:761px;top:1065px;width:49px;height:33px;background:#a7acb0"></div><div class="abs" style="left:769.5px;top:1065.7px;height:33px;display:flex;align-items:center;font-size:11px;-webkit-text-stroke:0.2px currentColor;color:#fff;line-height:17px;white-space:nowrap">130.00</div><div class="abs" style="left:653px;top:1099px;width:107px;height:33px;background:#a7acb0"></div><div class="abs" style="left:661.5px;top:1099.7px;height:33px;display:flex;align-items:center;font-size:11px;-webkit-text-stroke:0.2px currentColor;color:#fff;line-height:17px;white-space:nowrap">Dormitory Six Bed</div><div class="abs" style="left:761px;top:1099px;width:49px;height:33px;background:#a7acb0"></div><div class="abs" style="left:769.5px;top:1099.7px;height:33px;display:flex;align-items:center;font-size:11px;-webkit-text-stroke:0.2px currentColor;color:#fff;line-height:17px;white-space:nowrap">20.00</div><div class="abs" style="left:653px;top:1133px;width:107px;height:50px;background:#a7acb0"></div><div class="abs" style="left:661.5px;top:1133.7px;height:50px;display:flex;align-items:center;font-size:11px;-webkit-text-stroke:0.2px currentColor;color:#fff;line-height:17px;white-space:nowrap">Dormitory Seven<br>Bed</div><div class="abs" style="left:761px;top:1133px;width:49px;height:50px;background:#a7acb0"></div><div class="abs" style="left:769.5px;top:1133.7px;height:50px;display:flex;align-items:center;font-size:11px;-webkit-text-stroke:0.2px currentColor;color:#fff;line-height:17px;white-space:nowrap">18.00</div><div class="abs" style="left:653px;top:1184px;width:107px;height:33px;background:#a7acb0"></div><div class="abs" style="left:661.5px;top:1184.7px;height:33px;display:flex;align-items:center;font-size:11px;-webkit-text-stroke:0.2px currentColor;color:#fff;line-height:17px;white-space:nowrap">Double Room</div><div class="abs" style="left:761px;top:1184px;width:49px;height:33px;background:#a7acb0"></div><div class="abs" style="left:769.5px;top:1184.7px;height:33px;display:flex;align-items:center;font-size:11px;-webkit-text-stroke:0.2px currentColor;color:#fff;line-height:17px;white-space:nowrap">50.00</div>
<div class="abs nowrap" style="left:832.0px;top:800px;line-height:20px;font-size:10.7px;color:#333">Chelsea House</div><div class="abs" style="left:832.5px;top:827px;width:85.5px;height:33px;background:#808080"></div><div class="abs" style="left:841.0px;top:827.7px;height:33px;display:flex;align-items:center;font-size:11px;font-weight:bold;color:#fff;line-height:17px;white-space:nowrap">Rooms</div><div class="abs" style="left:919px;top:827px;width:60.5px;height:33px;background:#808080"></div><div class="abs" style="left:927.5px;top:827.7px;height:33px;display:flex;align-items:center;font-size:11px;font-weight:bold;color:#fff;line-height:17px;white-space:nowrap">Vacancy</div><div class="abs" style="left:832.5px;top:861px;width:85.5px;height:33px;background:#d9edf7"></div><div class="abs" style="left:841.0px;top:861.7px;height:33px;display:flex;align-items:center;font-size:11px;color:#333;line-height:17px;white-space:nowrap">Single Room</div><div class="abs" style="left:919px;top:861px;width:60.5px;height:33px;background:#d9edf7"></div><div class="abs" style="left:927.5px;top:861.7px;height:33px;display:flex;align-items:center;font-size:11px;color:#333;line-height:17px;white-space:nowrap">1</div><div class="abs" style="left:832.5px;top:895px;width:85.5px;height:33px;background:#f2dede"></div><div class="abs" style="left:841.0px;top:895.7px;height:33px;display:flex;align-items:center;font-size:11px;color:#333;line-height:17px;white-space:nowrap">Double Room</div><div class="abs" style="left:919px;top:895px;width:60.5px;height:33px;background:#f2dede"></div><div class="abs" style="left:927.5px;top:895.7px;height:33px;display:flex;align-items:center;font-size:11px;color:#333;line-height:17px;white-space:nowrap">8</div><div class="abs" style="left:832.5px;top:929px;width:85.5px;height:33px;background:#f2dede"></div><div class="abs" style="left:841.0px;top:929.7px;height:33px;display:flex;align-items:center;font-size:11px;color:#333;line-height:17px;white-space:nowrap">Twin Room</div><div class="abs" style="left:919px;top:929px;width:60.5px;height:33px;background:#f2dede"></div><div class="abs" style="left:927.5px;top:929.7px;height:33px;display:flex;align-items:center;font-size:11px;color:#333;line-height:17px;white-space:nowrap">8</div><div class="abs" style="left:832.5px;top:963px;width:85.5px;height:33px;background:#d9edf7"></div><div class="abs" style="left:841.0px;top:963.7px;height:33px;display:flex;align-items:center;font-size:11px;color:#333;line-height:17px;white-space:nowrap">Triple Room</div><div class="abs" style="left:919px;top:963px;width:60.5px;height:33px;background:#d9edf7"></div><div class="abs" style="left:927.5px;top:963.7px;height:33px;display:flex;align-items:center;font-size:11px;color:#333;line-height:17px;white-space:nowrap">3</div><div class="abs" style="left:832.5px;top:997px;width:85.5px;height:33px;background:#d9edf7"></div><div class="abs" style="left:841.0px;top:997.7px;height:33px;display:flex;align-items:center;font-size:11px;color:#333;line-height:17px;white-space:nowrap">Quad Room</div><div class="abs" style="left:919px;top:997px;width:60.5px;height:33px;background:#d9edf7"></div><div class="abs" style="left:927.5px;top:997.7px;height:33px;display:flex;align-items:center;font-size:11px;color:#333;line-height:17px;white-space:nowrap">3</div><div class="abs" style="left:832.5px;top:1031px;width:85.5px;height:33px;background:#d9edf7"></div><div class="abs" style="left:841.0px;top:1031.7px;height:33px;display:flex;align-items:center;font-size:11px;color:#333;line-height:17px;white-space:nowrap">Family Room</div><div class="abs" style="left:919px;top:1031px;width:60.5px;height:33px;background:#d9edf7"></div><div class="abs" style="left:927.5px;top:1031.7px;height:33px;display:flex;align-items:center;font-size:11px;color:#333;line-height:17px;white-space:nowrap">2</div>
<div class="abs nowrap" style="left:1023.0px;top:800px;line-height:20px;font-size:10.7px;color:#333">Hotel Bluebells</div><div class="abs" style="left:1023.5px;top:827px;width:85.5px;height:33px;background:#808080"></div><div class="abs" style="left:1032.0px;top:827.7px;height:33px;display:flex;align-items:center;font-size:11px;font-weight:bold;color:#fff;line-height:17px;white-space:nowrap">Rooms</div><div class="abs" style="left:1110px;top:827px;width:60px;height:33px;background:#808080"></div><div class="abs" style="left:1118.5px;top:827.7px;height:33px;display:flex;align-items:center;font-size:11px;font-weight:bold;color:#fff;line-height:17px;white-space:nowrap">Vacancy</div><div class="abs" style="left:1023.5px;top:861px;width:85.5px;height:33px;background:#d9edf7"></div><div class="abs" style="left:1032.0px;top:861.7px;height:33px;display:flex;align-items:center;font-size:11px;color:#333;line-height:17px;white-space:nowrap">Single Room</div><div class="abs" style="left:1110px;top:861px;width:60px;height:33px;background:#d9edf7"></div><div class="abs" style="left:1118.5px;top:861.7px;height:33px;display:flex;align-items:center;font-size:11px;color:#333;line-height:17px;white-space:nowrap">1</div><div class="abs" style="left:1023.5px;top:895px;width:85.5px;height:33px;background:#d9edf7"></div><div class="abs" style="left:1032.0px;top:895.7px;height:33px;display:flex;align-items:center;font-size:11px;color:#333;line-height:17px;white-space:nowrap">Double Room</div><div class="abs" style="left:1110px;top:895px;width:60px;height:33px;background:#d9edf7"></div><div class="abs" style="left:1118.5px;top:895.7px;height:33px;display:flex;align-items:center;font-size:11px;color:#333;line-height:17px;white-space:nowrap">4</div><div class="abs" style="left:1023.5px;top:929px;width:85.5px;height:33px;background:#d9edf7"></div><div class="abs" style="left:1032.0px;top:929.7px;height:33px;display:flex;align-items:center;font-size:11px;color:#333;line-height:17px;white-space:nowrap">Twin Room</div><div class="abs" style="left:1110px;top:929px;width:60px;height:33px;background:#d9edf7"></div><div class="abs" style="left:1118.5px;top:929.7px;height:33px;display:flex;align-items:center;font-size:11px;color:#333;line-height:17px;white-space:nowrap">4</div><div class="abs" style="left:1023.5px;top:963px;width:85.5px;height:33px;background:#d9edf7"></div><div class="abs" style="left:1032.0px;top:963.7px;height:33px;display:flex;align-items:center;font-size:11px;color:#333;line-height:17px;white-space:nowrap">Triple Room</div><div class="abs" style="left:1110px;top:963px;width:60px;height:33px;background:#d9edf7"></div><div class="abs" style="left:1118.5px;top:963.7px;height:33px;display:flex;align-items:center;font-size:11px;color:#333;line-height:17px;white-space:nowrap">3</div><div class="abs" style="left:1023.5px;top:997px;width:85.5px;height:33px;background:#d9edf7"></div><div class="abs" style="left:1032.0px;top:997.7px;height:33px;display:flex;align-items:center;font-size:11px;color:#333;line-height:17px;white-space:nowrap">Quad Room</div><div class="abs" style="left:1110px;top:997px;width:60px;height:33px;background:#d9edf7"></div><div class="abs" style="left:1118.5px;top:997.7px;height:33px;display:flex;align-items:center;font-size:11px;color:#333;line-height:17px;white-space:nowrap">2</div><div class="abs" style="left:1023.5px;top:1031px;width:85.5px;height:33px;background:#d9edf7"></div><div class="abs" style="left:1032.0px;top:1031.7px;height:33px;display:flex;align-items:center;font-size:11px;color:#333;line-height:17px;white-space:nowrap">Family Room</div><div class="abs" style="left:1110px;top:1031px;width:60px;height:33px;background:#d9edf7"></div><div class="abs" style="left:1118.5px;top:1031.7px;height:33px;display:flex;align-items:center;font-size:11px;color:#333;line-height:17px;white-space:nowrap">2</div>
<div class="abs nowrap" style="left:1215.0px;top:800px;line-height:20px;font-size:10.7px;color:#333">Acacia Hostel</div><div class="abs" style="left:1215.5px;top:827px;width:108.5px;height:33px;background:#808080"></div><div class="abs" style="left:1224.0px;top:827.7px;height:33px;display:flex;align-items:center;font-size:11px;font-weight:bold;color:#fff;line-height:17px;white-space:nowrap">Rooms</div><div class="abs" style="left:1325px;top:827px;width:60px;height:33px;background:#808080"></div><div class="abs" style="left:1333.5px;top:827.7px;height:33px;display:flex;align-items:center;font-size:11px;font-weight:bold;color:#fff;line-height:17px;white-space:nowrap">Vacancy</div><div class="abs" style="left:1215.5px;top:861px;width:108.5px;height:33px;background:#d9edf7"></div><div class="abs" style="left:1224.0px;top:861.7px;height:33px;display:flex;align-items:center;font-size:11px;color:#333;line-height:17px;white-space:nowrap">Single Room</div><div class="abs" style="left:1325px;top:861px;width:60px;height:33px;background:#d9edf7"></div><div class="abs" style="left:1333.5px;top:861.7px;height:33px;display:flex;align-items:center;font-size:11px;color:#333;line-height:17px;white-space:nowrap">1</div><div class="abs" style="left:1215.5px;top:895px;width:108.5px;height:33px;background:#d9edf7"></div><div class="abs" style="left:1224.0px;top:895.7px;height:33px;display:flex;align-items:center;font-size:11px;color:#333;line-height:17px;white-space:nowrap">Twin Room</div><div class="abs" style="left:1325px;top:895px;width:60px;height:33px;background:#d9edf7"></div><div class="abs" style="left:1333.5px;top:895.7px;height:33px;display:flex;align-items:center;font-size:11px;color:#333;line-height:17px;white-space:nowrap">2</div><div class="abs" style="left:1215.5px;top:929px;width:108.5px;height:33px;background:#d9edf7"></div><div class="abs" style="left:1224.0px;top:929.7px;height:33px;display:flex;align-items:center;font-size:11px;color:#333;line-height:17px;white-space:nowrap">Triple Room</div><div class="abs" style="left:1325px;top:929px;width:60px;height:33px;background:#d9edf7"></div><div class="abs" style="left:1333.5px;top:929.7px;height:33px;display:flex;align-items:center;font-size:11px;color:#333;line-height:17px;white-space:nowrap">3</div><div class="abs" style="left:1215.5px;top:963px;width:108.5px;height:33px;background:#d9edf7"></div><div class="abs" style="left:1224.0px;top:963.7px;height:33px;display:flex;align-items:center;font-size:11px;color:#333;line-height:17px;white-space:nowrap">Quad Room</div><div class="abs" style="left:1325px;top:963px;width:60px;height:33px;background:#d9edf7"></div><div class="abs" style="left:1333.5px;top:963.7px;height:33px;display:flex;align-items:center;font-size:11px;color:#333;line-height:17px;white-space:nowrap">3</div><div class="abs" style="left:1215.5px;top:997px;width:108.5px;height:33px;background:#d9edf7"></div><div class="abs" style="left:1224.0px;top:997.7px;height:33px;display:flex;align-items:center;font-size:11px;color:#333;line-height:17px;white-space:nowrap">Five Bed Room</div><div class="abs" style="left:1325px;top:997px;width:60px;height:33px;background:#d9edf7"></div><div class="abs" style="left:1333.5px;top:997.7px;height:33px;display:flex;align-items:center;font-size:11px;color:#333;line-height:17px;white-space:nowrap">4</div><div class="abs" style="left:1215.5px;top:1031px;width:108.5px;height:33px;background:#d9edf7"></div><div class="abs" style="left:1224.0px;top:1031.7px;height:33px;display:flex;align-items:center;font-size:11px;color:#333;line-height:17px;white-space:nowrap">Six Bed Private</div><div class="abs" style="left:1325px;top:1031px;width:60px;height:33px;background:#d9edf7"></div><div class="abs" style="left:1333.5px;top:1031.7px;height:33px;display:flex;align-items:center;font-size:11px;color:#333;line-height:17px;white-space:nowrap">1</div><div class="abs" style="left:1215.5px;top:1065px;width:108.5px;height:33px;background:#d9edf7"></div><div class="abs" style="left:1224.0px;top:1065.7px;height:33px;display:flex;align-items:center;font-size:11px;color:#333;line-height:17px;white-space:nowrap">Seven Bed Private</div><div class="abs" style="left:1325px;top:1065px;width:60px;height:33px;background:#d9edf7"></div><div class="abs" style="left:1333.5px;top:1065.7px;height:33px;display:flex;align-items:center;font-size:11px;color:#333;line-height:17px;white-space:nowrap">1</div><div class="abs" style="left:1215.5px;top:1099px;width:108.5px;height:33px;background:#f2dede"></div><div class="abs" style="left:1224.0px;top:1099.7px;height:33px;display:flex;align-items:center;font-size:11px;color:#333;line-height:17px;white-space:nowrap">Dormitory Six Bed</div><div class="abs" style="left:1325px;top:1099px;width:60px;height:33px;background:#f2dede"></div><div class="abs" style="left:1333.5px;top:1099.7px;height:33px;display:flex;align-items:center;font-size:11px;color:#333;line-height:17px;white-space:nowrap">24</div><div class="abs" style="left:1215.5px;top:1133px;width:108.5px;height:50px;background:#f2dede"></div><div class="abs" style="left:1224.0px;top:1133.7px;height:50px;display:flex;align-items:center;font-size:11px;color:#333;line-height:17px;white-space:nowrap">Dormitory Seven<br>Bed</div><div class="abs" style="left:1325px;top:1133px;width:60px;height:50px;background:#f2dede"></div><div class="abs" style="left:1333.5px;top:1133.7px;height:50px;display:flex;align-items:center;font-size:11px;color:#333;line-height:17px;white-space:nowrap">14</div><div class="abs" style="left:1215.5px;top:1184px;width:108.5px;height:33px;background:#dff0d8"></div><div class="abs" style="left:1224.0px;top:1184.7px;height:33px;display:flex;align-items:center;font-size:11px;color:#333;line-height:17px;white-space:nowrap">Double Room</div><div class="abs" style="left:1325px;top:1184px;width:60px;height:33px;background:#dff0d8"></div><div class="abs" style="left:1333.5px;top:1184.7px;height:33px;display:flex;align-items:center;font-size:11px;color:#333;line-height:17px;white-space:nowrap">0</div>
<div class="abs" style="left:832px;top:1141px;width:17px;height:17px;border-radius:3px;background:#f2dede"></div>
<div class="abs nowrap" style="left:851.5px;top:1144px;line-height:17px;font-size:11px;color:#333">Vacancy more than 5 Rooms</div>
<div class="abs" style="left:832px;top:1162px;width:17px;height:17px;border-radius:3px;background:#dff0d8"></div>
<div class="abs nowrap" style="left:851.5px;top:1165px;line-height:17px;font-size:11px;color:#333">Vacancy is 0 Room</div>
<div class="abs" style="left:832px;top:1183px;width:17px;height:17px;border-radius:3px;background:#d9edf7"></div>
<div class="abs nowrap" style="left:851.5px;top:1186px;line-height:17px;font-size:11px;color:#333">Vacancy is less than 5 Rooms</div>
<!-- FOOTER -->
<div class="abs" style="left:250px;top:1297px;width:1190px;height:48px;background:#fff;border-top:1px solid #d2d6de"></div>
<div class="abs nowrap" style="left:265px;top:1312px;line-height:20px;font-size:11.1px;color:#444">Copyright © 2014-2018, <span style="color:#3c8dbc">Kingsoftware</span>. All rights reserved.</div>

</body></html>
